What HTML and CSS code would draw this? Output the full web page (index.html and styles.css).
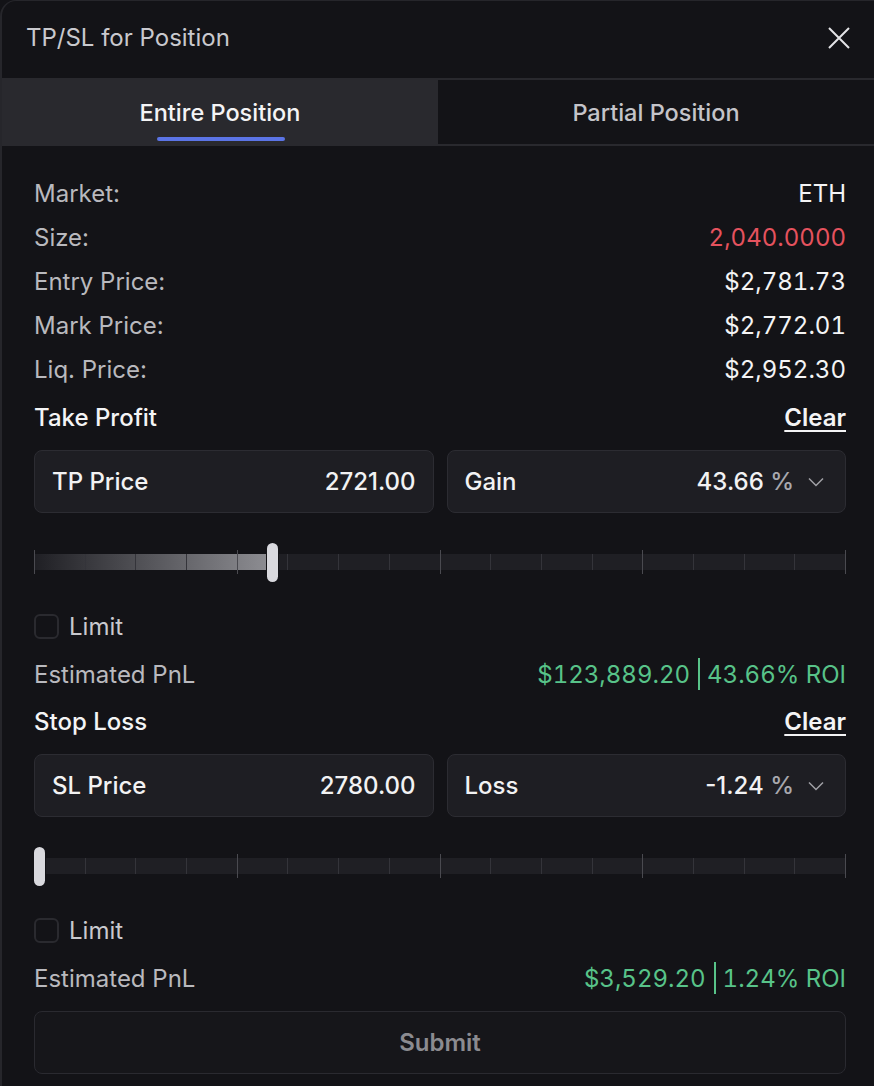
FILE: index.html
```html
<!DOCTYPE html>
<html lang="en">
<head>
    <meta charset="UTF-8">
    <meta name="viewport" content="width=device-width, initial-scale=1.0">
    <title>TP/SL for Position</title>
    <link rel="stylesheet" href="styles.css">
</head>
<body>

    <div class="dialog">
        <div class="header">
            <span class="title">TP/SL for Position</span>
            <button class="close" aria-label="Close">
                <svg width="22" height="22" viewBox="0 0 22 22"><path d="M1 1 L21 21 M21 1 L1 21" stroke="#e4e4e7" stroke-width="2" fill="none"/></svg>
            </button>
        </div>

        <div class="tabs">
            <div class="tab active">Entire Position<span class="indicator"></span></div>
            <div class="tab">Partial Position</div>
        </div>

        <div class="content">
            <div class="info-row"><span class="label">Market:</span><span class="value">ETH</span></div>
            <div class="info-row"><span class="label">Size:</span><span class="value red">2,040.0000</span></div>
            <div class="info-row"><span class="label">Entry Price:</span><span class="value">$2,781.73</span></div>
            <div class="info-row"><span class="label">Mark Price:</span><span class="value">$2,772.01</span></div>
            <div class="info-row"><span class="label">Liq. Price:</span><span class="value">$2,952.30</span></div>

            <!-- take profit -->
            <div class="section-head first"><span>Take Profit</span><a class="clear">Clear</a></div>
            <div class="inputs">
                <div class="field"><span class="field-label">TP Price</span><span class="field-value">2721.00</span></div>
                <div class="field"><span class="field-label">Gain</span><span class="field-value">43.66 <span class="unit">%</span></span>
                    <svg class="chevron" width="16" height="10" viewBox="0 0 16 10"><path d="M1 1.5 L8 8.5 L15 1.5" stroke="#a0a0a6" stroke-width="1.5" fill="none"/></svg>
                </div>
            </div>
            <div class="slider">
                <div class="track"></div>
                <div class="fill" style="width: 28.8%"></div>
                <div class="ticks">
                    <i class="major"></i><i></i><i></i><i></i><i class="major"></i><i></i><i></i><i></i><i class="major"></i><i></i><i></i><i></i><i class="major"></i><i></i><i></i><i></i><i class="major"></i>
                </div>
                <div class="thumb" style="left: 28.8%"></div>
            </div>
            <label class="limit"><span class="box"></span>Limit</label>
            <div class="pnl-row"><span class="label">Estimated PnL</span><span class="pnl">$123,889.20<span class="sep"></span>43.66% ROI</span></div>

            <!-- stop loss -->
            <div class="section-head"><span>Stop Loss</span><a class="clear">Clear</a></div>
            <div class="inputs">
                <div class="field"><span class="field-label">SL Price</span><span class="field-value">2780.00</span></div>
                <div class="field"><span class="field-label">Loss</span><span class="field-value">-1.24 <span class="unit">%</span></span>
                    <svg class="chevron" width="16" height="10" viewBox="0 0 16 10"><path d="M1 1.5 L8 8.5 L15 1.5" stroke="#a0a0a6" stroke-width="1.5" fill="none"/></svg>
                </div>
            </div>
            <div class="slider">
                <div class="track"></div>
                <div class="ticks">
                    <i class="major"></i><i></i><i></i><i></i><i class="major"></i><i></i><i></i><i></i><i class="major"></i><i></i><i></i><i></i><i class="major"></i><i></i><i></i><i></i><i class="major"></i>
                </div>
                <div class="thumb" style="left: 0.1%"></div>
            </div>
            <label class="limit"><span class="box"></span>Limit</label>
            <div class="pnl-row"><span class="label">Estimated PnL</span><span class="pnl">$3,529.20<span class="sep"></span>1.24% ROI</span></div>

            <button class="submit">Submit</button>
        </div>
    </div>

</body>
</html>
```

FILE: styles.css
```css
body {
    margin: 0;
    background: #131317;
    font-family: Inter, "Noto Sans", sans-serif;
    color: #f2f2f3;
    font-size: 24px;
}

.dialog {
    border-left: 2px solid #26262b;
    border-top: 1px solid #26262b;
    border-top-left-radius: 16px;
    height: 1085px;
    overflow: hidden;
}

.header {
    height: 77px;
    display: flex;
    align-items: center;
    justify-content: space-between;
    padding: 0 24px 0 24px;
    box-sizing: border-box;
}

.title {
    color: #c9c9ce;
    margin-top: -4px;
}

.close {
    background: none;
    border: none;
    padding: 0;
    display: flex;
    cursor: pointer;
    margin-top: -4px;
}

.tabs {
    display: flex;
    background: #29292e;
    padding: 2px 0;
    height: 68px;
    box-sizing: border-box;
}

.tab {
    flex: 1;
    display: flex;
    align-items: center;
    justify-content: center;
    position: relative;
    font-size: 23.5px;
    font-weight: 500;
    color: #c4c4c9;
    background: #131317;
}

.tab.active {
    background: transparent;
    color: #f4f4f5;
}

.tab .indicator {
    position: absolute;
    bottom: 3px;
    left: 50%;
    width: 128px;
    margin-left: -63px;
    height: 4px;
    border-radius: 2px;
    background: #5b74e6;
}

.content {
    padding: 25px 28px 0 32px;
}

.info-row, .section-head, .pnl-row {
    height: 44px;
    display: flex;
    align-items: center;
    justify-content: space-between;
}

.label {
    color: #b9b9be;
}

.value, .pnl {
    font-variant-numeric: tabular-nums;
}

.value {
    color: #f4f4f5;
}

.red {
    color: #e5525e;
}

.section-head {
    font-weight: 500;
    color: #f4f4f5;
}

.section-head.first {
    margin-top: 4px;
}

.section-head + .inputs {
    margin-top: 11px;
}

.clear {
    font-weight: 600;
    text-decoration: underline;
    text-underline-offset: 4px;
    text-decoration-thickness: 2px;
    cursor: pointer;
}

.inputs {
    display: grid;
    grid-template-columns: 1fr 1fr;
    gap: 13px;
}

.field {
    height: 63px;
    box-sizing: border-box;
    display: flex;
    align-items: center;
    padding: 0 17px;
    background: #1e1e23;
    border: 1px solid #2c2c32;
    border-radius: 8px;
    font-weight: 500;
}

.field-label {
    flex: 1;
    color: #f2f2f3;
}

.field-value {
    color: #f2f2f3;
}

.unit {
    color: #a8a8ae;
}

.chevron {
    margin-left: 14px;
    margin-right: 4px;
}

.slider {
    position: relative;
    height: 39px;
    margin-top: 30px;
}

.track {
    position: absolute;
    left: 0;
    right: 0;
    top: 11px;
    height: 16px;
    background: #1f1f24;
}

.fill {
    position: absolute;
    left: 0;
    top: 11px;
    height: 16px;
    background: linear-gradient(to right, rgba(140, 140, 145, 0), #8d8d92);
}

.ticks {
    position: absolute;
    left: 0;
    right: 0;
    top: 7px;
    height: 24px;
    display: flex;
    justify-content: space-between;
    align-items: center;
}

.ticks i {
    width: 1px;
    height: 16px;
    background: #34343a;
}

.ticks i.major {
    height: 24px;
    background: #4a4a50;
}

.thumb {
    position: absolute;
    top: 0;
    width: 11px;
    height: 39px;
    margin-left: -1px;
    border-radius: 6px;
    background: #d9d9de;
    box-shadow: 0 0 0 1px #131317;
}

.limit {
    margin-top: 32px;
    height: 24px;
    display: flex;
    align-items: center;
    gap: 10px;
    color: #c9c9ce;
}

.box {
    width: 21px;
    height: 21px;
    border: 2px solid #2a2a2f;
    border-radius: 6px;
}

.pnl-row {
    margin-top: 14px;
}

.pnl {
    display: flex;
    align-items: center;
    color: #58c389;
}

.sep {
    width: 2px;
    height: 32px;
    background: #58c389;
    margin: 0 7px 0 8px;
}

.pnl-row + .section-head {
    margin-top: 3px;
}

.submit {
    display: block;
    width: 100%;
    height: 63px;
    margin-top: 11px;
    background: #16161a;
    border: 1px solid #2a2a30;
    border-radius: 8px;
    color: #8b8b90;
    font-family: inherit;
    font-size: 24px;
    font-weight: 600;
}
```
